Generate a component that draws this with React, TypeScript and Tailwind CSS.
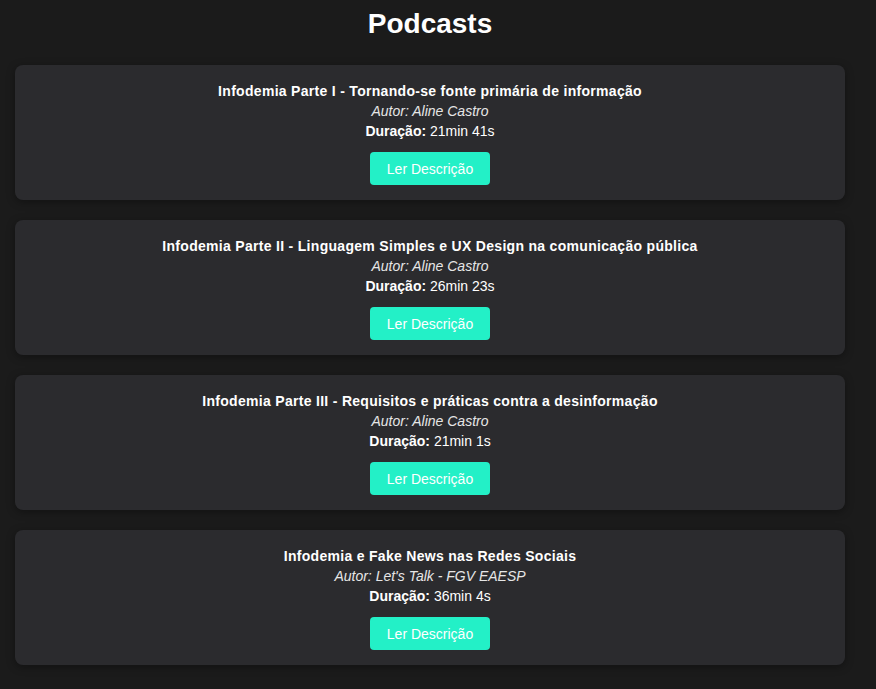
import React from "react";

const podcasts = [
  {
    title: "Infodemia Parte I - Tornando-se fonte primária de informação",
    author: "Aline Castro",
    duration: "21min 41s",
  },
  {
    title: "Infodemia Parte II - Linguagem Simples e UX Design na comunicação pública",
    author: "Aline Castro",
    duration: "26min 23s",
  },
  {
    title: "Infodemia Parte III - Requisitos e práticas contra a desinformação",
    author: "Aline Castro",
    duration: "21min 1s",
  },
  {
    title: "Infodemia e Fake News nas Redes Sociais",
    author: "Let's Talk - FGV EAESP",
    duration: "36min 4s",
  },
];

const PodcastCard = ({ title, author, duration }: (typeof podcasts)[number]) => {
  return (
    <div className="flex flex-col items-center bg-[#2b2b2e] rounded-lg pt-4 pb-[15px] shadow-[0_2px_8px_rgba(0,0,0,0.35)] text-white text-sm leading-5">
      <h3 className="font-bold tracking-[0.3px]">{title}</h3>
      <p className="italic text-[#e6e6e6]">Autor: {author}</p>
      <p>
        <span className="font-bold">Duração:</span> {duration}
      </p>
      <button className="mt-[11px] h-[33px] w-[120px] bg-[#23f0c7] rounded text-white text-sm">
        Ler Descrição
      </button>
    </div>
  );
};

export default function App() {
  return (
    <div
      className="min-h-screen bg-[#1b1b1b] pt-2 pb-6"
      style={{ fontFamily: '"Liberation Sans", Arial, sans-serif' }}
    >
      <div className="w-[830px] ml-[15px]">
        <h1 className="text-center text-white font-bold text-[28px] leading-8">Podcasts</h1>
        <div className="flex flex-col gap-5 mt-[25px]">
          {podcasts.map((p) => (
            <PodcastCard key={p.title} {...p} />
          ))}
        </div>
      </div>
    </div>
  );
}
